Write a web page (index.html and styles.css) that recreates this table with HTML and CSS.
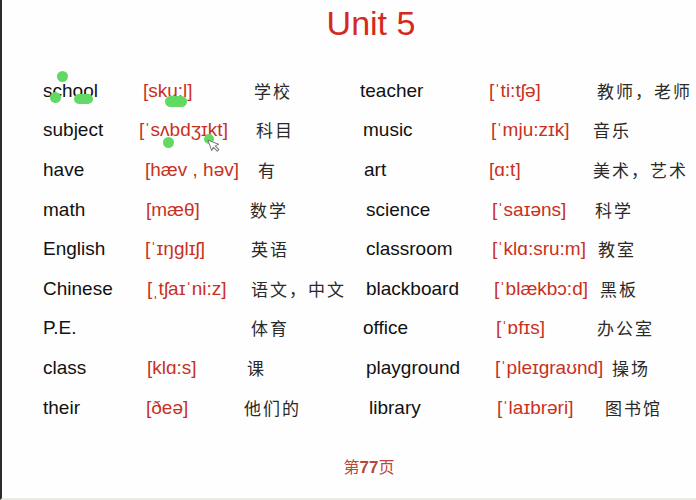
FILE: index.html
```html
<!DOCTYPE html>
<html lang="zh">
<head>
<meta charset="utf-8">
<title>Unit 5</title>
<link rel="stylesheet" href="styles.css">
</head>
<body>
<div class="slide">
  <h1 class="title">Unit 5</h1>
  <div class="vocab">
    <span class="en">school</span><span class="ph">[sku:l]</span><span class="zh n4">学校</span>
    <span class="en n-2">teacher</span><span class="ph n-1">[ˈti:tʃə]</span><span class="zh n2">教师，老师</span>

    <span class="en">subject</span><span class="ph n-4">[ˈsʌbdʒɪkt]</span><span class="zh n6">科目</span>
    <span class="en n1">music</span><span class="ph n1">[ˈmju:zɪk]</span><span class="zh n-2">音乐</span>

    <span class="en">have</span><span class="ph n2">[hæv , həv]</span><span class="zh n8">有</span>
    <span class="en n2">art</span><span class="ph n-1">[ɑ:t]</span><span class="zh n-2">美术，艺术</span>

    <span class="en">math</span><span class="ph n3">[mæθ]</span><span class="zh">数学</span>
    <span class="en n4">science</span><span class="ph n2">[ˈsaɪəns]</span><span class="zh">科学</span>

    <span class="en">English</span><span class="ph n2">[ˈɪŋglɪʃ]</span><span class="zh n1">英语</span>
    <span class="en n4">classroom</span><span class="ph n2">[ˈklɑ:sru:m]</span><span class="zh n3">教室</span>

    <span class="en">Chinese</span><span class="ph n4">[ˌtʃaɪˈni:z]</span><span class="zh n1">语文，中文</span>
    <span class="en n4">blackboard</span><span class="ph n4">[ˈblækbɔ:d]</span><span class="zh n5">黑板</span>

    <span class="en">P.E.</span><span class="ph"></span><span class="zh n1">体育</span>
    <span class="en n1">office</span><span class="ph n6">[ˈɒfɪs]</span><span class="zh n2">办公室</span>

    <span class="en">class</span><span class="ph n4">[klɑ:s]</span><span class="zh n-3">课</span>
    <span class="en n4">playground</span><span class="ph n5">[ˈpleɪgraʊnd]</span><span class="zh n17">操场</span>

    <span class="en">their</span><span class="ph n3">[ðeə]</span><span class="zh n-6">他们的</span>
    <span class="en n7">library</span><span class="ph n7">[ˈlaɪbrəri]</span><span class="zh n10">图书馆</span>
  </div>
  <p class="page">第<b>77</b>页</p>

  <span class="dot d1"></span>
  <span class="dot d2"></span>
  <span class="dot d3"></span>
  <span class="dot d4"></span>
  <span class="dot d5"></span>
  <span class="dot d6"></span>
  <svg class="cursor" width="12" height="16" viewBox="0 0 12 16" aria-hidden="true">
    <path d="M1 1 L1 12 L3.8 9.6 L6 14.6 L8 13.7 L5.9 8.9 L9.6 8.6 Z" fill="#fff" stroke="#777" stroke-width="1" stroke-linejoin="round"/>
  </svg>
</div>
</body>
</html>
```

FILE: styles.css
```css
html, body {
  margin: 0;
  padding: 0;
  background: #fefefe;
}

.slide {
  position: relative;
  width: 696px;
  height: 500px;
  box-sizing: border-box;
  border-left: 2px solid #2b2b2b;
  border-bottom: 2px solid #ebebe6;
  background: #fefefe;
  overflow: hidden;
  font-family: "Liberation Sans", Arial, sans-serif;
}

.title {
  margin: 0;
  height: 71px;
  box-sizing: border-box;
  padding: 1px 0 0 44px;
  font-family: "Liberation Sans", Arial, sans-serif;
  font-weight: 400;
  font-size: 34px;
  line-height: 44px;
  color: #d42a1d;
  text-align: center;
}

.vocab {
  display: grid;
  grid-template-columns: 100px 107px 112px 128px 105px 1fr;
  grid-auto-rows: 39.6px;
  align-items: center;
  padding-left: 41px;
  white-space: nowrap;
}

.en {
  font-size: 19px;
  line-height: 22px;
  color: #111;
}

.ph {
  font-size: 19px;
  line-height: 22px;
  color: #c9311f;
}

.zh {
  font-family: "Noto Sans CJK SC", sans-serif;
  font-size: 17px;
  line-height: 22px;
  letter-spacing: 2px;
  color: #2a2a2a;
}

.n-6 { margin-left: -6px; }
.n-4 { margin-left: -4px; }
.n-3 { margin-left: -3px; }
.n-2 { margin-left: -2px; }
.n-1 { margin-left: -1px; }
.n1 { margin-left: 1px; }
.n2 { margin-left: 2px; }
.n3 { margin-left: 3px; }
.n4 { margin-left: 4px; }
.n5 { margin-left: 5px; }
.n6 { margin-left: 6px; }
.n7 { margin-left: 7px; }
.n8 { margin-left: 8px; }
.n10 { margin-left: 10px; }
.n17 { margin-left: 17px; }

.page {
  margin: 28px 0 0;
  padding-left: 40px;
  text-align: center;
  font-family: "Noto Sans CJK SC", sans-serif;
  font-size: 16px;
  line-height: 22px;
  color: #b8493a;
}

.page b {
  font-family: "Liberation Sans", Arial, sans-serif;
  font-weight: 700;
  font-size: 17px;
}

.dot {
  position: absolute;
  background: #62d962;
  border-radius: 6px;
}

.d1 { left: 55px; top: 71px; width: 11px; height: 11px; }
.d2 { left: 48px; top: 92px; width: 11px; height: 11px; }
.d3 { left: 72px; top: 94px; width: 19px; height: 10px; }
.d4 { left: 163px; top: 96px; width: 22px; height: 11px; }
.d5 { left: 161px; top: 137px; width: 11px; height: 11px; }
.d6 { left: 202px; top: 134px; width: 10px; height: 10px; }

.cursor {
  position: absolute;
  left: 207px;
  top: 137px;
  transform: rotate(-20deg);
}
```
